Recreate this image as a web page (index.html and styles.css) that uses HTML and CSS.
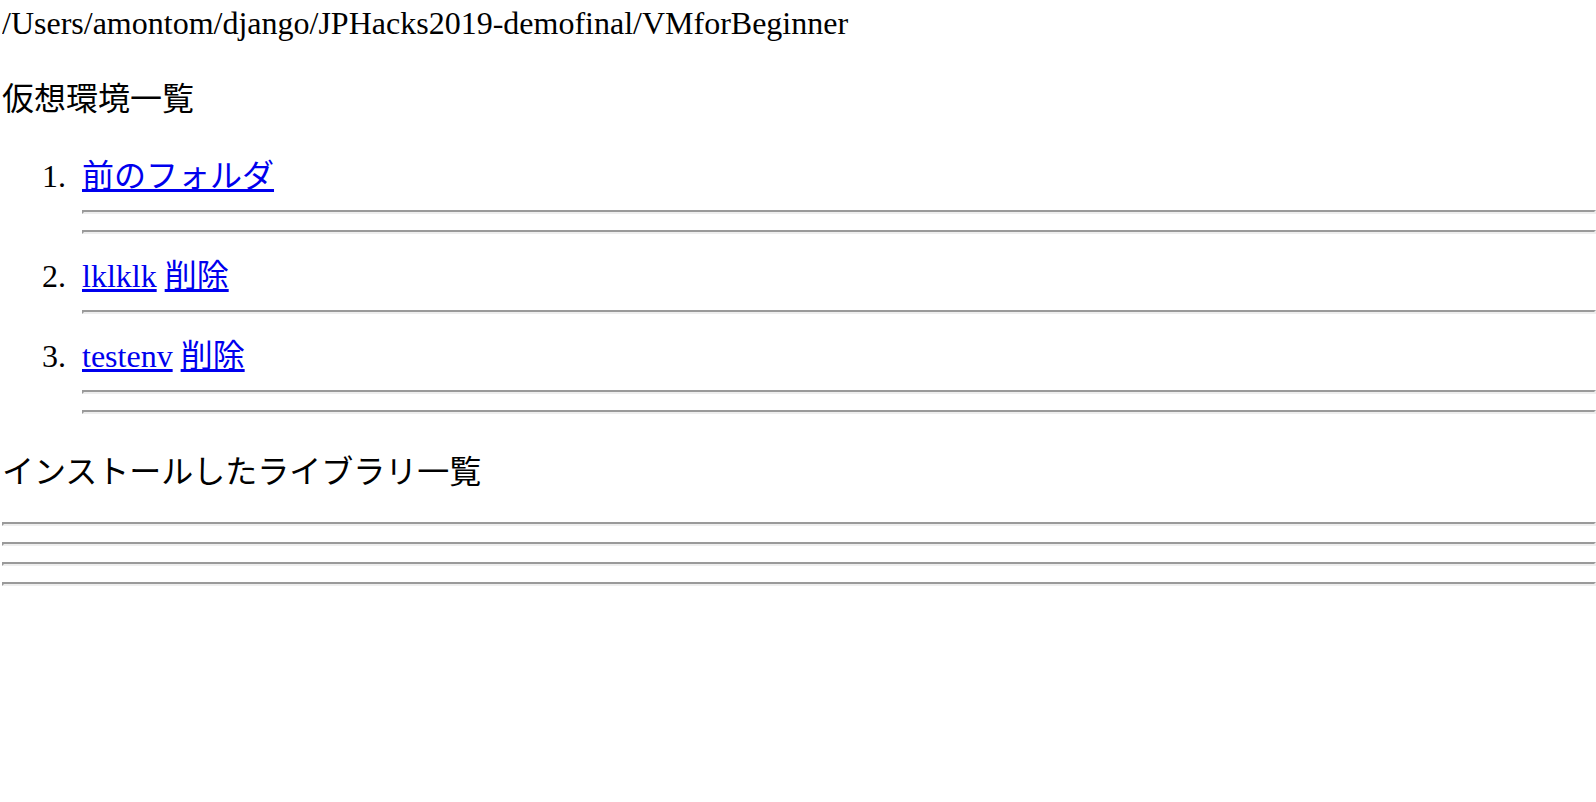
FILE: index.html
```html
<!DOCTYPE html>
<html lang="ja">
<head>
<meta charset="utf-8">
<title>VMforBeginner</title>
<link rel="stylesheet" href="styles.css">
</head>
<body>
<div class="path">/Users/amontom/django/JPHacks2019-demofinal/VMforBeginner</div>
<p class="title title-env">仮想環境一覧</p>
<ol class="env-list">
  <li class="env-item"><span class="line"><a href="#">前のフォルダ</a></span><hr class="rule"><hr class="rule"></li>
  <li class="env-item"><span class="line"><a href="#">lklklk</a> <a href="#">削除</a></span><hr class="rule"></li>
  <li class="env-item"><span class="line"><a href="#">testenv</a> <a href="#">削除</a></span><hr class="rule"><hr class="rule"></li>
</ol>
<p class="title title-lib">インストールしたライブラリ一覧</p>
<hr class="rule">
<hr class="rule">
<hr class="rule">
<hr class="rule">
</body>
</html>
```
FILE: styles.css
```css
html {
  background: #fff;
}

body {
  margin: 0 0 0 2px;
  font-family: "Liberation Serif", "Noto Sans CJK JP", serif;
  font-size: 32px;
  color: #000;
}

a {
  color: #0000ee;
  text-decoration: underline;
}

.path {
  padding-top: 1px;
  line-height: 44px;
}

.title {
  padding-top: 8px;
  line-height: 36px;
  margin: 0;
}

.title-env {
  margin-top: 28px;
  margin-bottom: 33px;
}

.title-lib {
  margin-top: 32px;
  margin-bottom: 32px;
}

.env-list {
  margin: 0 0 32px 0;
  padding-left: 80px;
}

.env-item::marker {
  content: counter(list-item) ".\2002";
}

.env-item {
  padding-top: 8px;
  line-height: 36px;
}

.rule {
  height: 0;
  margin: 16px 0;
  border-style: solid;
  border-width: 2px;
  border-color: #9a9a9a #eeeeee #eeeeee #9a9a9a;
}
```
